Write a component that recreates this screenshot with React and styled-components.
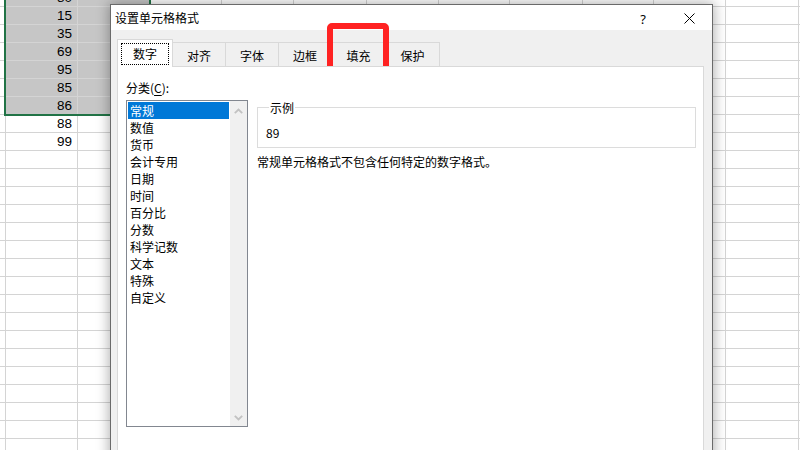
import React from "react";
import styled, { createGlobalStyle } from "styled-components";

const GlobalStyle = createGlobalStyle`
  html, body {
    margin: 0;
    padding: 0;
    width: 800px;
    height: 450px;
    overflow: hidden;
    background: #ffffff;
  }
  body {
    font-family: "Noto Sans CJK SC", "Noto Sans", sans-serif;
  }
  * { box-sizing: border-box; }
`;

const CJK = `"Noto Sans CJK SC", "Noto Sans", sans-serif`;

const Page = styled.div`
  position: relative;
  width: 800px;
  height: 450px;
  overflow: hidden;
  background: #ffffff;
`;

/* ---------- spreadsheet background ---------- */
const Sheet = styled.div`
  display: grid;
  grid-template-columns: 6px 72px 72px 72px 72px 73px 72px 71px 73px 71px 72px 73px 1fr;
  grid-auto-rows: 18px;
  margin-top: -11px;
`;

const Cell = styled.div`
  border-right: 1px solid #d4d4d4;
  border-bottom: 1px solid #d4d4d4;
  background: ${(p) => (p.$selected ? "#c6c6c6" : "#ffffff")};
  font-family: "Liberation Sans", Arial, sans-serif;
  font-size: 13.5px;
  line-height: 17px;
  color: #000;
  text-align: right;
  padding-right: 5px;
  overflow: hidden;
  white-space: nowrap;
`;

const SelectionOutline = styled.div`
  position: absolute;
  left: 4px;
  top: -10px;
  width: 147px;
  height: 126px;
  border: 2px solid #217346;
  pointer-events: none;
`;

/* ---------- dialog window ---------- */
const Dialog = styled.div`
  position: absolute;
  left: 110px;
  top: 4px;
  width: 603px;
  height: 470px;
  display: flex;
  flex-direction: column;
  border: 1px solid #6a6a6a;
  background: #f0f0f0;
  box-shadow: 0 0 12px 1px rgba(0, 0, 0, 0.32);
`;

const TitleBar = styled.div`
  height: 25px;
  flex: none;
  display: flex;
  align-items: center;
  justify-content: space-between;
  background: #ffffff;
  padding-left: 4px;
`;

const Title = styled.div`
  font-family: ${CJK};
  font-size: 12px;
  line-height: 17px;
  color: #000;
`;

const TitleButtons = styled.div`
  display: flex;
  height: 100%;
`;

const TitleButton = styled.div`
  width: 46px;
  height: 100%;
  display: flex;
  align-items: center;
  justify-content: center;
  padding-top: 2px;
  font-family: "Noto Sans", "DejaVu Sans", sans-serif;
  font-size: 13px;
  color: #000;
`;

const Body = styled.div`
  flex: 1;
  display: flex;
  flex-direction: column;
  padding: 0 8px 0 6px;
  min-height: 0;
`;

const TabStrip = styled.div`
  height: 37px;
  flex: none;
  display: flex;
  align-items: flex-end;
`;

const Tab = styled.div`
  position: relative;
  z-index: ${(p) => (p.$active ? 2 : "auto")};
  width: ${(p) => p.$w}px;
  height: ${(p) => (p.$active ? 28 : 25)}px;
  margin-left: ${(p) => (p.$first ? 0 : -1)}px;
  padding-top: ${(p) => (p.$active ? 3 : 2)}px;
  border: 1px solid #d9d9d9;
  border-bottom: none;
  background: ${(p) => (p.$active ? "#ffffff" : "#f0f0f0")};
  display: flex;
  justify-content: center;
  align-items: flex-start;
`;

const TabLabel = styled.span`
  width: 48px;
  height: 22px;
  padding-bottom: 2px;
  display: flex;
  align-items: center;
  justify-content: center;
  border: 1px dotted ${(p) => (p.$focus ? "#000" : "transparent")};
  font-family: ${CJK};
  font-size: 12px;
  line-height: 17px;
  color: #000;
`;

const Panel = styled.div`
  position: relative;
  z-index: 1;
  flex: 1;
  margin-top: -1px;
  background: #ffffff;
  border: 1px solid #d9d9d9;
  display: flex;
  gap: 9px;
  padding: 12px 7px 0 8px;
`;

const LeftColumn = styled.div`
  display: flex;
  flex-direction: column;
  gap: 3px;
  width: 122px;
  flex: none;
`;

const FieldLabel = styled.div`
  font-family: ${CJK};
  font-size: 12px;
  line-height: 18px;
  color: #000;
  u { text-underline-offset: 2px; }
`;

const ListBox = styled.div`
  width: 122px;
  height: 327px;
  border: 1px solid #828790;
  display: flex;
  background: #fff;
`;

const Items = styled.div`
  flex: 1;
  padding: 1px 1px 0 1px;
  display: flex;
  flex-direction: column;
`;

const Item = styled.div`
  height: 17px;
  padding-left: 2px;
  font-family: ${CJK};
  font-size: 12px;
  line-height: 17px;
  color: ${(p) => (p.$selected ? "#ffffff" : "#000000")};
  background: ${(p) => (p.$selected ? "#0078d7" : "transparent")};
  white-space: nowrap;
`;

const ScrollBar = styled.div`
  width: 17px;
  flex: none;
  background: #f0f0f0;
  display: flex;
  flex-direction: column;
  justify-content: space-between;
  align-items: center;
  padding: 7px 0 5px;
`;

const RightColumn = styled.div`
  flex: 1;
  display: flex;
  flex-direction: column;
`;

const GroupBox = styled.fieldset`
  margin: 20px 0 0 0;
  padding: 8px 8px 6px 8px;
  border: 1px solid #dcdcdc;
  min-inline-size: 0;
`;

const Legend = styled.legend`
  margin-left: 3px;
  padding: 0 1px;
  font-family: ${CJK};
  font-size: 12px;
  line-height: 17px;
  color: #000;
`;

const SampleValue = styled.div`
  font-family: ${CJK};
  font-size: 12px;
  line-height: 17px;
  color: #000;
`;

const Description = styled.div`
  margin-top: 5px;
  font-family: ${CJK};
  font-size: 12px;
  line-height: 17px;
  color: #000;
`;

const Highlight = styled.div`
  position: absolute;
  left: 327px;
  top: 23px;
  width: 62px;
  height: 64px;
  border: 6px solid #ff2222;
  border-radius: 5px;
  pointer-events: none;
`;

/* ---------- data ---------- */
const colCount = 13;
const rowCount = 27;
const values = ["80", "15", "35", "69", "95", "85", "86", "88", "99"];

const tabs = [
  { label: "数字", w: 56 },
  { label: "对齐", w: 54 },
  { label: "字体", w: 54 },
  { label: "边框", w: 54 },
  { label: "填充", w: 55 },
  { label: "保护", w: 55 },
];

const categories = [
  "常规",
  "数值",
  "货币",
  "会计专用",
  "日期",
  "时间",
  "百分比",
  "分数",
  "科学记数",
  "文本",
  "特殊",
  "自定义",
];

const Chevron = ({ up }) => (
  <svg width="9" height="6" viewBox="0 0 9 6">
    <polyline
      points={up ? "0.8,5.2 4.5,1.5 8.2,5.2" : "0.8,0.8 4.5,4.5 8.2,0.8"}
      fill="none"
      stroke="#c2c2c2"
      strokeWidth="1.8"
    />
  </svg>
);

export default function App() {
  const cells = [];
  for (let r = 0; r < rowCount; r++) {
    for (let c = 0; c < colCount; c++) {
      const selected = r <= 6 && c >= 1 && c <= 2;
      const text = c === 1 && r < values.length ? values[r] : "";
      cells.push(
        <Cell key={`${r}-${c}`} $selected={selected}>
          {text}
        </Cell>
      );
    }
  }

  return (
    <Page>
      <GlobalStyle />
      <Sheet>{cells}</Sheet>
      <SelectionOutline />
      <Dialog>
        <TitleBar>
          <Title>设置单元格格式</Title>
          <TitleButtons>
            <TitleButton>?</TitleButton>
            <TitleButton>
              <svg width="11" height="11" viewBox="0 0 11 11">
                <path d="M0.5 0.5 L10.5 10.5 M10.5 0.5 L0.5 10.5" stroke="#000" strokeWidth="1" />
              </svg>
            </TitleButton>
          </TitleButtons>
        </TitleBar>
        <Body>
          <TabStrip>
            {tabs.map((t, i) => (
              <Tab key={t.label} $w={t.w} $active={i === 0} $first={i === 0}>
                <TabLabel $focus={i === 0}>{t.label}</TabLabel>
              </Tab>
            ))}
          </TabStrip>
          <Panel>
            <LeftColumn>
              <FieldLabel>
                分类(<u>C</u>):
              </FieldLabel>
              <ListBox>
                <Items>
                  {categories.map((c, i) => (
                    <Item key={c} $selected={i === 0}>
                      {c}
                    </Item>
                  ))}
                </Items>
                <ScrollBar>
                  <Chevron up />
                  <Chevron />
                </ScrollBar>
              </ListBox>
            </LeftColumn>
            <RightColumn>
              <GroupBox>
                <Legend>示例</Legend>
                <SampleValue>89</SampleValue>
              </GroupBox>
              <Description>常规单元格格式不包含任何特定的数字格式。</Description>
            </RightColumn>
          </Panel>
        </Body>
      </Dialog>
      <Highlight />
    </Page>
  );
}
